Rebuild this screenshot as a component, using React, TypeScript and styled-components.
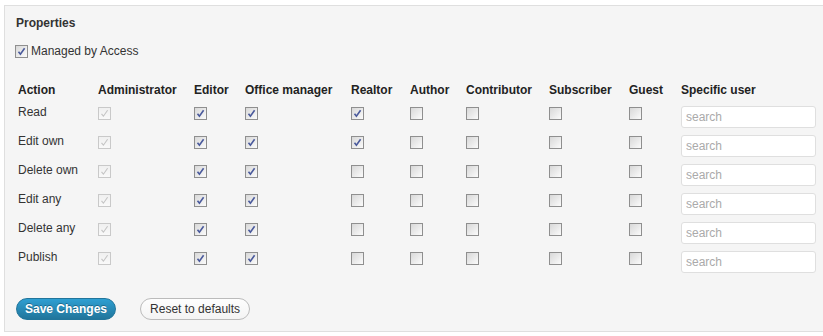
import styled, { createGlobalStyle } from 'styled-components';

const GlobalStyle = createGlobalStyle`
  body {
    margin: 0;
    background: #fff;
    font-family: "Liberation Sans", Arial, sans-serif;
    color: #333;
    overflow: hidden;
  }
`;

const Panel = styled.div`
  box-sizing: border-box;
  margin: 5px 0 0 4px;
  width: 840px;
  height: 327px;
  border: 1px solid #dfdfdf;
  background: #f5f5f5;
  padding: 0 11px;
`;

const Title = styled.h3`
  margin: 9px 0 0;
  font-size: 12px;
  line-height: 16px;
  font-weight: bold;
  color: #333;
`;

const ManagedRow = styled.label`
  display: flex;
  align-items: center;
  gap: 3px;
  margin: 12px 0 0 -1px;
  height: 16px;
  font-size: 12px;
  color: #333;
`;

const Box = styled.span<{ $disabled?: boolean }>`
  box-sizing: border-box;
  display: inline-flex;
  align-items: center;
  justify-content: center;
  width: 13px;
  height: 13px;
  border: 1px solid ${(p) => (p.$disabled ? '#c9c9c9' : '#8f8f8f')};
  background: ${(p) =>
    p.$disabled
      ? 'linear-gradient(#f0f0f0, #f9f9f9)'
      : 'linear-gradient(135deg, #d8d8d8, #fbfbfb)'};
`;

const Checkbox = ({ checked, disabled }: { checked?: boolean; disabled?: boolean }) => (
  <Box $disabled={disabled}>
    {checked && (
      <svg width="9" height="9" viewBox="0 0 9 9">
        <path
          d="M1.5 4.8 L3.4 7.2 L7.6 1.2"
          fill="none"
          stroke={disabled ? '#c4c4c4' : '#4a5a9c'}
          strokeWidth={disabled ? 1.1 : 1.6}
        />
      </svg>
    )}
  </Box>
);

const Table = styled.table`
  margin: 22px 0 0 2px;
  border-collapse: collapse;
  table-layout: fixed;
`;

const HeadRow = styled.tr`
  height: 23px;
`;

const Row = styled.tr`
  height: 29px;
`;

const Th = styled.th<{ $w: number }>`
  width: ${(p) => p.$w}px;
  padding: 1px 0 0;
  vertical-align: top;
  text-align: left;
  font-size: 12px;
  line-height: 16px;
  font-weight: bold;
  color: #222;
  white-space: nowrap;
`;

const Td = styled.td`
  padding: 0;
  vertical-align: top;
  font-size: 12px;
  line-height: 16px;
`;

const LabelCell = styled(Td)`
  color: #333;
`;

const BoxCell = styled(Td)`
  padding-top: 3px;
  line-height: 0;
`;

const InputCell = styled(Td)`
  padding-top: 2px;
  line-height: 0;
`;

const SearchInput = styled.input`
  box-sizing: border-box;
  width: 135px;
  height: 22px;
  border: 1px solid #dfdfdf;
  border-radius: 3px;
  background: #fff;
  padding: 0 4px;
  font-family: "Liberation Sans", Arial, sans-serif;
  font-size: 12px;
  color: #333;
  outline: none;
  &::placeholder {
    color: #aaa;
  }
`;

const Actions = styled.div`
  display: flex;
  gap: 24px;
  margin-top: 20px;
`;

const PrimaryButton = styled.button`
  box-sizing: border-box;
  height: 22px;
  padding: 0 8px;
  border: 1px solid #21759b;
  border-radius: 11px;
  background: linear-gradient(#2e9fd2, #21759b);
  color: #fff;
  font-family: "Liberation Sans", Arial, sans-serif;
  font-size: 12px;
  font-weight: bold;
  text-shadow: 0 -1px 0 rgba(0, 0, 0, 0.3);
`;

const SecondaryButton = styled.button`
  box-sizing: border-box;
  height: 22px;
  padding: 0 9px;
  border: 1px solid #bbb;
  border-radius: 11px;
  background: linear-gradient(#fefefe, #f4f4f4);
  color: #333;
  font-family: "Liberation Sans", Arial, sans-serif;
  font-size: 12px;
`;

const roles = [
  { name: 'Administrator', w: 96 },
  { name: 'Editor', w: 51 },
  { name: 'Office manager', w: 106 },
  { name: 'Realtor', w: 59 },
  { name: 'Author', w: 56 },
  { name: 'Contributor', w: 83 },
  { name: 'Subscriber', w: 80 },
  { name: 'Guest', w: 52 },
];

// which roles are ticked for each action (admin column is always disabled)
const actions = [
  { name: 'Read', checked: [true, true, true, true, false, false, false, false] },
  { name: 'Edit own', checked: [true, true, true, true, false, false, false, false] },
  { name: 'Delete own', checked: [true, true, true, false, false, false, false, false] },
  { name: 'Edit any', checked: [true, true, true, false, false, false, false, false] },
  { name: 'Delete any', checked: [true, true, true, false, false, false, false, false] },
  { name: 'Publish', checked: [true, true, true, false, false, false, false, false] },
];

const App = () => {
  return (
    <>
      <GlobalStyle />
      <Panel>
        <Title>Properties</Title>
        <ManagedRow>
          <Checkbox checked />
          Managed by Access
        </ManagedRow>
        <Table>
          <thead>
            <HeadRow>
              <Th $w={80}>Action</Th>
              {roles.map((role) => (
                <Th key={role.name} $w={role.w}>
                  {role.name}
                </Th>
              ))}
              <Th $w={140}>Specific user</Th>
            </HeadRow>
          </thead>
          <tbody>
            {actions.map((action) => (
              <Row key={action.name}>
                <LabelCell>{action.name}</LabelCell>
                {action.checked.map((checked, i) => (
                  <BoxCell key={roles[i].name}>
                    <Checkbox checked={checked} disabled={i === 0} />
                  </BoxCell>
                ))}
                <InputCell>
                  <SearchInput placeholder="search" />
                </InputCell>
              </Row>
            ))}
          </tbody>
        </Table>
        <Actions>
          <PrimaryButton>Save Changes</PrimaryButton>
          <SecondaryButton>Reset to defaults</SecondaryButton>
        </Actions>
      </Panel>
    </>
  );
};

export default App;
